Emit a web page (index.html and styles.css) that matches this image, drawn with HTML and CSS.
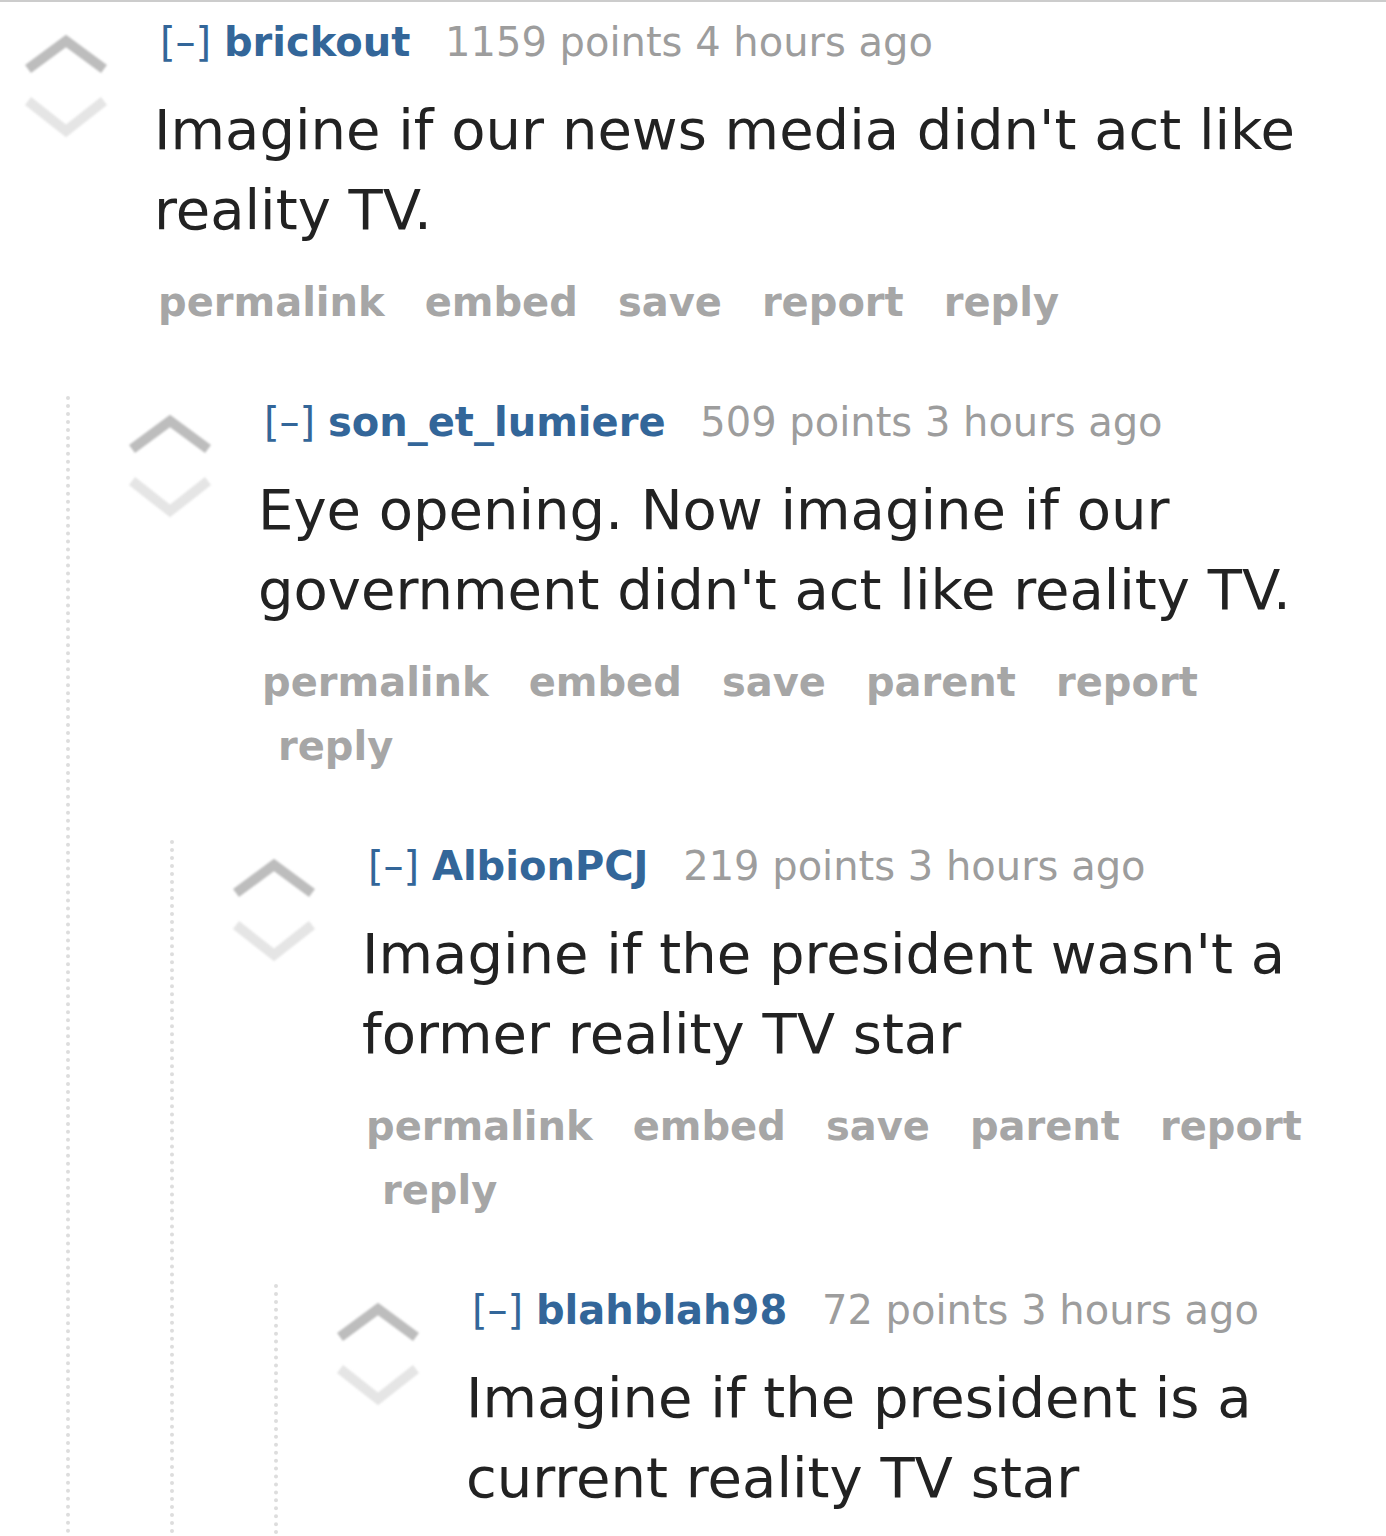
FILE: index.html
```html
<!DOCTYPE html>
<html lang="en">
<head>
    <meta charset="UTF-8">
    <meta name="viewport" content="width=device-width, initial-scale=1.0">
    <title>comments</title>
    <link rel="stylesheet" href="styles.css">
</head>
<body>
    <div class="comments">
        <div class="comment">
            <div class="row">
                <div class="midcol">
                    <svg viewBox="0 0 92 124"><polyline class="up" points="8,53 46,25 84,53"/><polyline class="down" points="8,85 46,115 84,85"/></svg>
                </div>
                <div class="entry">
                    <p class="tagline"><span class="expand">[–]</span> <span class="author">brickout</span> <span class="score">1159 points</span> <span class="time">4 hours ago</span></p>
                    <div class="md">Imagine if our news media didn't act like reality TV.</div>
                    <ul class="buttons">
                        <li>permalink</li>
                        <li>embed</li>
                        <li>save</li>
                        <li>report</li>
                        <li>reply</li>
                    </ul>
                </div>
            </div>

            <div class="child">
                <div class="comment">
                    <div class="row">
                        <div class="midcol">
                            <svg viewBox="0 0 92 124"><polyline class="up" points="8,53 46,25 84,53"/><polyline class="down" points="8,85 46,115 84,85"/></svg>
                        </div>
                        <div class="entry">
                            <p class="tagline"><span class="expand">[–]</span> <span class="author">son_et_lumiere</span> <span class="score">509 points</span> <span class="time">3 hours ago</span></p>
                            <div class="md">Eye opening. Now imagine if our government didn't act like reality TV.</div>
                            <ul class="buttons">
                                <li>permalink</li>
                                <li>embed</li>
                                <li>save</li>
                                <li>parent</li>
                                <li>report</li>
                                <li>reply</li>
                            </ul>
                        </div>
                    </div>

                    <div class="child">
                        <div class="comment">
                            <div class="row">
                                <div class="midcol">
                                    <svg viewBox="0 0 92 124"><polyline class="up" points="8,53 46,25 84,53"/><polyline class="down" points="8,85 46,115 84,85"/></svg>
                                </div>
                                <div class="entry">
                                    <p class="tagline"><span class="expand">[–]</span> <span class="author">AlbionPCJ</span> <span class="score">219 points</span> <span class="time">3 hours ago</span></p>
                                    <div class="md">Imagine if the president wasn't a former reality TV star</div>
                                    <ul class="buttons">
                                        <li>permalink</li>
                                        <li>embed</li>
                                        <li>save</li>
                                        <li>parent</li>
                                        <li>report</li>
                                        <li>reply</li>
                                    </ul>
                                </div>
                            </div>

                            <div class="child">
                                <div class="comment">
                                    <div class="row">
                                        <div class="midcol">
                                            <svg viewBox="0 0 92 124"><polyline class="up" points="8,53 46,25 84,53"/><polyline class="down" points="8,85 46,115 84,85"/></svg>
                                        </div>
                                        <div class="entry last">
                                            <p class="tagline"><span class="expand">[–]</span> <span class="author">blahblah98</span> <span class="score">72 points</span> <span class="time">3 hours ago</span></p>
                                            <div class="md">Imagine if the president is a current reality TV star</div>
                                        </div>
                                    </div>
                                </div>
                            </div>
                        </div>
                    </div>
                </div>
            </div>
        </div>
    </div>
</body>
</html>
```

FILE: styles.css
```css
* {
    margin: 0;
    padding: 0;
}
body {
    background-color: #fff;
    font-family: "DejaVu Sans", Verdana, sans-serif;
    overflow: hidden;
}
.comments {
    border-top: 2px solid #ccc;
    padding: 14px 20px 0 0;
}
.row {
    display: flex;
}
.midcol {
    width: 154px;
    flex-shrink: 0;
}
/* 投票箭头 */
.midcol svg {
    display: block;
    width: 92px;
    height: 124px;
    margin-left: 20px;
    filter: blur(1px);
}
.midcol polyline {
    fill: none;
    stroke-width: 10;
}
.midcol .up {
    stroke: #bdbdbd;
}
.midcol .down {
    stroke: #e5e5e5;
}
.entry {
    flex: 1;
    min-width: 0;
}
.entry.last {
    padding-bottom: 80px;
}
.tagline {
    padding: 2px 0 0 6px;
    font-size: 40px;
    line-height: 48px;
    color: #9d9d9d;
    white-space: nowrap;
}
.expand,
.author {
    color: #336699;
}
.author {
    font-weight: bold;
    margin-right: 22px;
}
.md {
    margin-top: 24px;
    font-size: 56px;
    line-height: 80px;
    color: #222;
}
.buttons {
    display: flex;
    flex-wrap: wrap;
    list-style: none;
    margin: 20px 0 62px;
    padding-left: 4px;
}
.buttons li {
    padding: 0 24px 0 16px;
    font-size: 40px;
    line-height: 64px;
    font-weight: bold;
    color: #a6a6a6;
    white-space: nowrap;
}
.buttons li:first-child {
    padding-left: 0;
}
/* 子评论 虚线 */
.child {
    margin-left: 66px;
    border-left: 4px dotted #ddd;
    padding-left: 34px;
}
```
